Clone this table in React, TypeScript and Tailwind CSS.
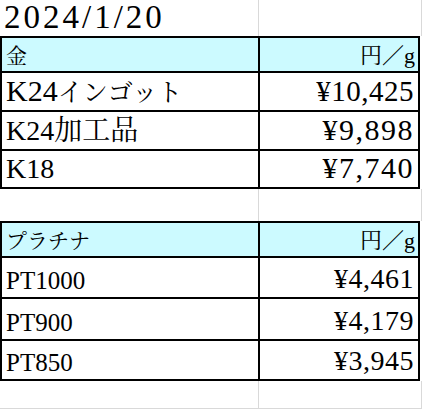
type Row = { code: string; jp?: string; price: string; size: string; priceSize: string; h: string };

const gold: Row[] = [
  { code: "K24", jp: "インゴット", price: "¥10,425", size: "text-[30px]", priceSize: "text-[29px] tracking-[0.5px]", h: "h-[39px]" },
  { code: "K24", jp: "加工品", price: "¥9,898", size: "text-[28px]", priceSize: "text-[30px] tracking-[1.5px]", h: "h-[39px]" },
  { code: "K18", price: "¥7,740", size: "text-[28px]", priceSize: "text-[30px] tracking-[1.5px]", h: "h-[38px]" },
];

const platinum: Row[] = [
  { code: "PT1000", price: "¥4,461", size: "text-[25px]", priceSize: "text-[28px] tracking-[0.5px]", h: "h-[41px]" },
  { code: "PT900", price: "¥4,179", size: "text-[25px]", priceSize: "text-[28px] tracking-[0.5px]", h: "h-[42px]" },
  { code: "PT850", price: "¥3,945", size: "text-[25px]", priceSize: "text-[28px] tracking-[0.5px]", h: "h-[40px]" },
];

function PriceTable({ title, rows }: { title: string; rows: Row[] }) {
  return (
    <div className="w-[420px] border-2 border-black">
      <div className="grid h-[33px] grid-cols-[256px_1fr] bg-[#ccfaff]">
        <div className="flex items-end px-1 pb-[4px] text-[21px] leading-none">{title}</div>
        <div className="flex items-end justify-end border-l-2 border-black pb-[4px] pr-[3px] text-[22px] leading-none">
          円／g
        </div>
      </div>
      {rows.map((r) => (
        <div key={r.code + r.price} className={`grid grid-cols-[256px_1fr] border-t-2 border-black ${r.h}`}>
          <div className={`flex items-end px-1 pb-[4px] leading-none ${r.size}`}>
            <span>
              {r.code}
              {r.jp && <span className={r.jp === "インゴット" ? "text-[25px]" : ""}>{r.jp}</span>}
            </span>
          </div>
          <div className={`flex items-end justify-end border-l-2 border-black pb-[4px] pr-[4px] leading-none ${r.priceSize}`}>
            {r.price}
          </div>
        </div>
      ))}
    </div>
  );
}

export default function App() {
  return (
    <div className="h-[411px] w-[422px] overflow-hidden bg-white font-['Liberation_Serif','Noto_Serif_CJK_JP',serif] text-black">
      <div className="grid h-[36px] w-[422px] grid-cols-[258px_1fr]">
        <div className="flex items-end px-1 pb-[2px] text-[33px] leading-none tracking-[3px]">2024/1/20</div>
        <div className="border-l border-r border-[#d9d9d9]" />
      </div>
      <PriceTable title="金" rows={gold} />
      <div className="grid h-[32px] w-[422px] grid-cols-[258px_1fr]">
        <div />
        <div className="border-l border-r border-[#d9d9d9]" />
      </div>
      <PriceTable title="プラチナ" rows={platinum} />
      <div className="grid h-[28px] w-[422px] grid-cols-[258px_1fr] border-b border-[#d9d9d9]">
        <div />
        <div className="border-l border-r border-[#d9d9d9]" />
      </div>
    </div>
  );
}
